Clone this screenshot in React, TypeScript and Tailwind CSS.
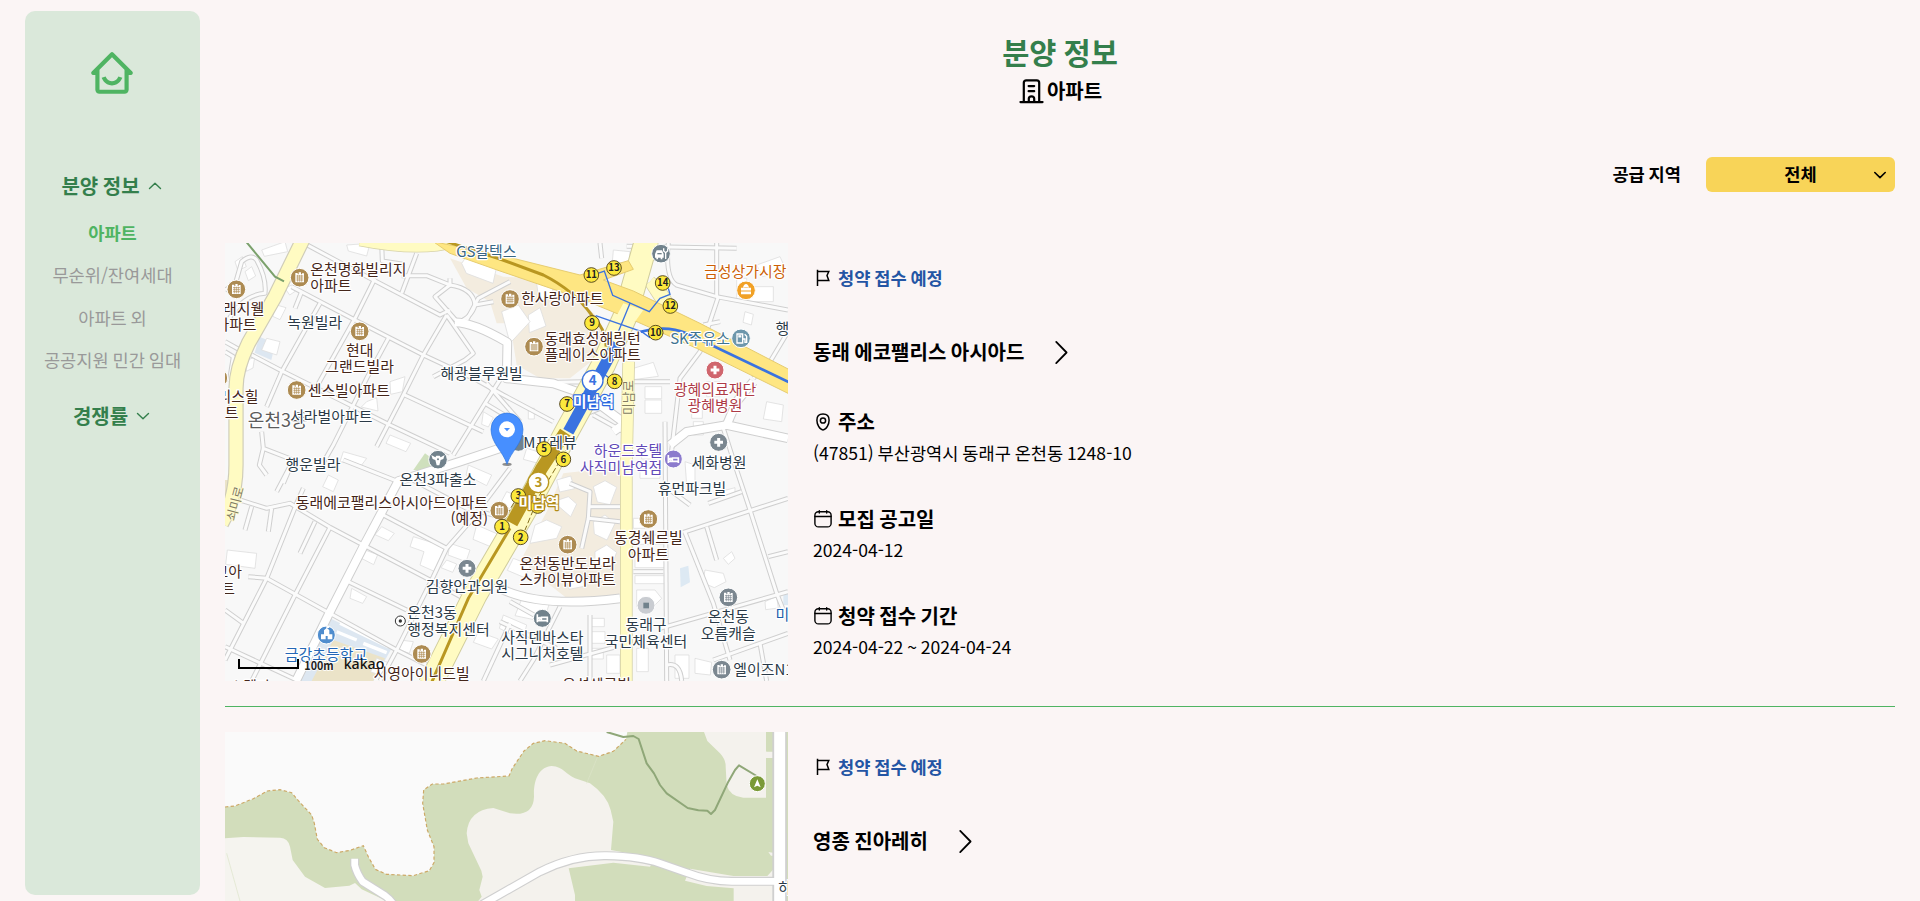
import React from 'react';
import { BiHomeSmile } from 'react-icons/bi';

type IconProps = { className?: string };

const Chevron = ({ d, className, weight = 1.4 }: { d: string; className: string; weight?: number }) => (
  <svg className={className} viewBox="0 0 14 14" fill="none" stroke="currentColor" strokeWidth={weight} strokeLinecap="round" strokeLinejoin="round">
    <path d={d} />
  </svg>
);

const BuildingIcon = ({ className }: IconProps) => (
  <svg className={className} viewBox="0 0 26 26" fill="none" stroke="#000" strokeWidth="2.300" strokeLinecap="round" strokeLinejoin="round">
    <path d="M1.500 24H24.500M5 24V4Q5 1.500 7.600 1.500H18.400Q21 1.500 21 4V24M10 7.300H15.800M10 12.700H15.800M10.200 24V20.500Q10.200 18 13 18T15.800 20.500V24" />
  </svg>
);

const FlagIcon = ({ className }: IconProps) => (
  <svg className={className} viewBox="0 0 20 20" fill="none" stroke="#000" strokeWidth="1.500" strokeLinecap="square">
    <path d="M4.500 2.500V17.300M4.500 3.500H15.800L14 7.500 15.800 12.500H4.500" />
  </svg>
);

const PinIcon = ({ className }: IconProps) => (
  <svg className={className} viewBox="0 0 20 20" fill="none" stroke="#000" strokeWidth="1.500">
    <path d="M3.900 8.200C3.900 4.500 6.300 2.100 10 2.100S16.100 4.500 16.100 8.200C16.100 12 13.500 17.900 10 17.900S3.900 12 3.900 8.200Z" />
    <circle cx="10" cy="8.500" r="2.600" />
  </svg>
);

const CalendarIcon = ({ className }: IconProps) => (
  <svg className={className} viewBox="0 0 20 20" fill="none" stroke="#000" strokeWidth="1.400" strokeLinecap="round">
    <rect x="1.900" y="2.700" width="16.200" height="15.200" rx="3.500" />
    <path d="M2 7.500H18M6.300 1.700V4M13.700 1.700V4" />
  </svg>
);

const minorRoads = [
  'M262 30L355 80 660 240 690 225', 'M485 24L487 78 550 88', 'M590 55L545 175', 'M465 130L405 250 290 455',
  'M215 155L405 255 610 360 770 435 850 480 1000 560', 'M245 170L225 220', 'M300 205L185 410 140 515', 'M505 310L440 430 340 630 300 700',
  'M680 240L610 360 545 490 470 635', 'M95 360L190 410 350 490 510 570 690 655', 'M550 478L790 590', 'M545 122H620L690 150V130',
  'M690 150L645 185 720 270', 'M690 150Q760 160 765 210 755 250 705 265', 'M680 240L760 355 735 375 640 425', 'M865 395L795 505 700 660',
  'M800 445L900 560', 'M795 505L870 550', 'M125 590L130 640 220 675 170 770', 'M130 640L118 690 140 720', 'M15 275Q60 180 135 175 140 130 110 75 95 55 65 80L45 150 15 165',
  'M15 320L60 345', 'M15 350L40 365 28 440', 'M220 675L190 745',
  'M740 255L775 190 870 140', 'M765 210L820 200',
  'M60 795L140 820 210 805 330 877 430 930', 'M95 815L75 885', 'M155 820L145 890', 'M250 760L230 805 140 1030 15 1275', 'M330 877L225 1080 95 1338',
  'M285 860L240 955', 'M85 1025L140 1030 320 1130', 'M15 1125L70 1165', 'M370 675L530 738', 'M430 930L630 1035 740 1095', 'M490 840L680 940',
  'M870 700L750 860 680 940 640 1025 530 1245 480 1338', 'M385 1040L560 1125', 'M330 1135L530 1245 620 1290', 'M870 1165L790 1338', 'M15 1235L230 1335',
  'M560 725L740 820 860 850', 'M1140 24L1145 70', 'M1220 34L1550 40', 'M1345 24Q1335 130 1370 150L1490 185 1704 225', 'M1495 185L1440 350 1380 430 1350 690',
  'M1490 24V185', 'M1450 270L1500 260', 'M1704 290L1650 380 1600 430', 'M1120 540L1210 590', 'M1240 440L1350 440', 'M1015 442L1090 440 1140 520 1040 560',
  'M1335 560L1340 1338', 'M1240 1010H1330', 'M1510 580L1545 690 1590 825 1670 1075 1700 1150', 'M1390 892L1704 790', 'M1395 892L1480 1105 1530 1275', 'M1460 875L1490 975',
  'M1320 1180L1704 1070', 'M1480 1275L1704 1195', 'M1620 1225L1640 1338', 'M1465 805L1565 770', 'M1350 765L1410 810', 'M1645 965L1704 950',
  'M1020 1115L940 1275 900 1338', 'M840 1160L1010 1240', 'M1110 1140V1338', 'M990 1290L1190 1235', 'M1340 1290Q1380 1280 1385 1338', 'M870 1100L960 1150',
  'M1050 745L1110 770 1105 850 1200 860', 'M1200 815L1110 815', 'M1105 850L1085 940',
];
const wideRoads = [
  'M705 262Q760 262 862 322L860 430 1000 445 1100 480 1215 565', 'M1215 565L1180 590', 'M870 630L720 680 535 738 430 935 325 1140 228 1338',
  'M840 1060Q960 1120 1200 1090', 'M1704 610L1520 570 1400 590 1350 630', 'M1520 570L1550 500 1600 440',
];
const buildings = [
  'M125 45l70-25 8 30-70 14z', 'M45 80l22-15 12 30-25 12z', 'M75 110l20-15 12 28-22 14z', 'M380 30l70-5-10 38-55-15z', 'M725 85l14-20 90 35-10 45-80-30z',
  'M195 160l20-10 12 18-18 12z', 'M170 210l28 8-18 36-22-10z', 'M140 310l40 10-10 40-45-15z', 'M82 375l22-8-5 32-20 10z', 'M510 440l45-15-8 45-35 8z', 'M440 500l30-12 4 40-50-12z',
  'M510 600l62 25-14 25-60-25z', 'M370 650l70 20-15 20-65-10z', 'M790 530l30 18-15 28-20-8z', 'M22 945l88 10-5 45-88-12z', 'M325 720l30 15-15 35-32-15z', 'M485 875l38 20-18 22-40-18z',
  'M580 905l95 30-30 75-45-20 12-40-42-15z', 'M435 945l38 14-12 30-35-18z', 'M690 925l60 20-12 35-54-20z', 'M680 975l30 12-12 25-35-14z', 'M395 1060l45 25-12 20-38-15z', 'M540 1215l40 5-12 35-35-12z',
  'M745 690l70 30-15 32-62-32z', 'M770 870l65 28-16 40-60-25z', 'M470 1270l40 15-20 40-38-15z', 'M850 1140l70 30-12 45-70-35z', 'M775 1190l60 22-20 30-55-20z',
  'M925 240l35-22 18 55-50 20z', 'M845 230l50-20 35 50-60 65z', 'M950 145l40-18 12 60-45 10z', 'M1550 130h30v25h80v45h-110z', 'M1180 45l50 5-3 35-50-4z', 'M1610 90l70-25 18 40-70 20z',
  'M1275 455h50v36h-50z', 'M1275 495h50v40h-50z', 'M1240 400l60-18 15 42-75 10z', 'M1415 500h32v50h-32z', 'M1460 440h40v45h-40z', 'M1420 560h30v40h-30z', 'M1575 230l25 8-6 32-25-8z',
  'M1265 640h42v32h-42z', 'M1260 700h60v30h-60z', 'M1395 680l30 10v60h-25z', 'M1640 500l50 10-5 50-55-8z', 'M1240 850h35v30h-35z', 'M1245 900h90v28h-90z', 'M1245 960h90v38h-90z', 'M1245 1022h90v24h-90z',
  'M1250 1065h55l20 25-25 25h-50z', 'M1455 1005l55 10 8 25-35 18-35-15z', 'M1510 970l25-20 10 20-20 18z', 'M1500 770l45-12v25l-40 12z', 'M1365 1260h42v70h-42z', 'M1425 1270l50 12-4 38-46-5z',
  'M1115 1150h38v25h-38z', 'M1115 1190h40v35h-40z', 'M1115 1240h35v32h-35z', 'M1160 1260h40v55h-40z', 'M1250 1240h35v70h-35z', 'M910 1080l80 20-20 60-85-18z',
  'M945 870l35-15 45 20-15 35-80 15z', 'M1000 800l45-15 25 22-18 38z', 'M1010 735l42-12 12 38-45 10z', 'M1120 755l35-18 35 20-20 52-38-8z', 'M1120 860l35-20 30 25-24 50-38-18z', 'M1125 950l35-20 30 22-20 52-45-20z', 'M1040 1030l35-12 22 35-50 10z',
  'M860 770l30 12-16 42-35-15z', 'M880 970l52 20-18 38-52-22z', 'M925 520h18v32h-18z', 'M920 640l50 15-15 30-45-12z', 'M1635 1100l35-16 5 35-38 5z',
];

type Label = { t: string; x: number; y: number; c?: string; s?: number; a?: 'start' | 'end'; halo?: string; w?: number };
const BROWN = '#45261a';
const SLATE = '#2b3a47';
const labels: Label[] = [
  { t: '온천명화빌리지', x: 271, y: 120, c: BROWN, a: 'start' }, { t: '아파트', x: 271, y: 169, c: BROWN, a: 'start' },
  { t: '래지웰', x: 71, y: 236, c: BROWN }, { t: '아파트', x: 48, y: 286, c: BROWN }, { t: '녹원빌라', x: 284, y: 280 },
  { t: '현대', x: 419, y: 363, c: BROWN }, { t: '그랜드빌라', x: 419, y: 412, c: BROWN }, { t: '센스빌아파트', x: 263, y: 483, c: BROWN, a: 'start' },
  { t: '리스힐', x: 54, y: 501, c: BROWN }, { t: '트', x: 35, y: 550, c: BROWN }, { t: '온천3동', x: 173, y: 575, c: '#5c5c5c', s: 54 },
  { t: '서라벌아파트', x: 334, y: 560 }, { t: '행운빌라', x: 279, y: 705 }, { t: '해광블루원빌', x: 785, y: 431 }, { t: 'GS칼텍스', x: 799, y: 66, c: '#386583' },
  { t: '한사랑아파트', x: 1027, y: 208, c: BROWN }, { t: '동래효성해링턴', x: 1118, y: 327, c: BROWN }, { t: '플레이스아파트', x: 1118, y: 376, c: BROWN },
  { t: '금성상가시장', x: 1576, y: 127, c: '#cc5f05' }, { t: 'SK주유소', x: 1440, y: 328, c: '#3f7492' }, { t: '행', x: 1687, y: 298 },
  { t: '광혜의료재단', x: 1485, y: 480, c: '#ae3b47' }, { t: '광혜병원', x: 1485, y: 529, c: '#ae3b47' }, { t: 'M프레뷰', x: 990, y: 638 },
  { t: '하운드호텔', x: 1327, y: 664, c: '#6149b8', a: 'end' }, { t: '사직미남역점', x: 1327, y: 713, c: '#6149b8', a: 'end' },
  { t: '세화병원', x: 1497, y: 699 }, { t: '휴먼파크빌', x: 1416, y: 778 },
  { t: '온천3파출소', x: 654, y: 750 }, { t: '동래에코팰리스아시아드아파트', x: 804, y: 819, c: BROWN, a: 'end' }, { t: '(예정)', x: 804, y: 868, c: BROWN, a: 'end' },
  { t: '교아', x: 25, y: 1027, c: BROWN }, { t: '트', x: 24, y: 1078, c: BROWN }, { t: '김향안과의원', x: 741, y: 1072 },
  { t: '온천3동', x: 562, y: 1150, a: 'start' }, { t: '행정복지센터', x: 562, y: 1200, a: 'start' }, { t: '금강초등학교', x: 318, y: 1274, c: '#2567b5' },
  { t: '지영아이니드빌', x: 605, y: 1331, c: BROWN }, { t: '스텔라', x: 90, y: 1370, c: BROWN },
  { t: '동경쉐르빌', x: 1285, y: 925, c: BROWN }, { t: '아파트', x: 1285, y: 974, c: BROWN },
  { t: '온천동반도보라', x: 1043, y: 1002, c: BROWN }, { t: '스카이뷰아파트', x: 1043, y: 1051, c: BROWN },
  { t: '사직덴바스타', x: 967, y: 1224 }, { t: '시그니처호텔', x: 967, y: 1273 }, { t: '동래구', x: 1278, y: 1185 }, { t: '국민체육센터', x: 1278, y: 1235 },
  { t: '온천동', x: 1525, y: 1162 }, { t: '오름캐슬', x: 1525, y: 1212 }, { t: '엘이즈N1', x: 1540, y: 1320, a: 'start' }, { t: '미', x: 1687, y: 1154, c: '#1c5eaa' },
  { t: '우성쉐르빌', x: 1130, y: 1365, c: BROWN },
];

const MapText = ({ t, x, y, c = SLATE, s = 44.8, a, halo = '#fff', w = 400 }: Label) => (
  <text x={x} y={y} fill={c} fontSize={s} fontWeight={w} textAnchor={a ?? 'middle'} stroke={halo} strokeWidth="7" strokeLinejoin="round" paintOrder="stroke">{t}</text>
);

const Apt = ({ x, y, c = '#ad8b52' }: { x: number; y: number; c?: string }) => (
  <g transform={`translate(${x} ${y})`}>
    <circle r="28" fill={c} stroke="#fff" strokeWidth="3" />
    <path d="M-13 -10V-14H-6V-10H-3V-16H4V-10H7V-13H13V14H-13Z" fill="#fff" />
    <path d="M-10 -5H11M-10 1H11M-10 7H11M-6 -8V12M0 -8V12M6 -8V12" stroke={c} strokeWidth="2" />
  </g>
);
const Cross = ({ x, y, c = '#7b8790' }: { x: number; y: number; c?: string }) => (
  <g transform={`translate(${x} ${y})`}>
    <circle r="27" fill={c} stroke="#fff" strokeWidth="3" />
    <path d="M-13 0H13M0 -13V13" stroke="#fff" strokeWidth="9" />
  </g>
);
const Bed = ({ x, y, c }: { x: number; y: number; c: string }) => (
  <g transform={`translate(${x} ${y})`}>
    <circle r="27" fill={c} stroke="#fff" strokeWidth="3" />
    <path d="M-15 -12V12M-15 7H15V12M15 7V-3H-3V7M-9 -2a2 2 0 1 0 .1 0" stroke="#fff" strokeWidth="5" fill="none" />
  </g>
);
const Exit = ({ n, x, y }: { n: number; x: number; y: number }) => (
  <g>
    <circle cx={x} cy={y} r="22" fill="#fce83c" stroke="#5b4d20" strokeWidth="3" />
    <text x={x} y={y + 10} fontSize="29" fontWeight="700" textAnchor="middle" fill="#222">{n}</text>
  </g>
);

const apartments = [[239, 128], [49, 163], [419, 289], [230, 465], [-5, 429], [870, 192], [942, 335], [838, 827], [605, 1257], [1285, 852], [1043, 929]];
const exits = [[11, 1114, 120], [13, 1182, 99], [14, 1328, 144], [12, 1351, 213], [9, 1116, 264], [10, 1307, 293], [8, 1184, 439], [7, 1041, 507], [5, 972, 642], [6, 1030, 673], [1, 846, 875], [2, 902, 907]];

const CityMap = () => (
  <svg className="block h-[438px] w-[563px]" viewBox="15 24 1689 1314" preserveAspectRatio="none">
    <rect x="15" y="24" width="1689" height="1314" fill="#f8f8f8" />
    <path d="M690 70L850 125 960 130 1040 150 1125 240 1160 300 1150 350 1050 430 960 430 890 390 870 265 830 265 810 200 740 160Z" fill="#f3ecdf" />
    <path d="M1030 715L1200 695V1080L1060 1105 900 980 980 830Z" fill="#f3ecdf" />
    <path d="M615 655l40 30-15 25-60-5z" fill="#cfe0bd" />
    <path d="M118 305l48 20-12 50-50-22z" fill="#dde7f1" />
    <path d="M330 1150L515 1240 460 1338H230Z" fill="#dde7f1" />
    <path d="M340 1215L495 1270 460 1338H275Z" fill="#ebe3c8" />
    <path d="M1380 1000l25-8 5 50-28 15zM1690 1075h20v35h-20z" fill="#dde9f3" />
    <path d="M15 735h12v50H15z" fill="#ebe3c8" />
    <g fill="none" stroke="#fff" strokeWidth="10"><path d="M360 1165l145 70M350 1190l60 25M430 1225l70 28" /></g>
    <g fill="#fff" stroke="#dedede" strokeWidth="2.500">{buildings.map((d) => <path key={d} d={d} />)}</g>
    <g fill="none" strokeLinejoin="round">
      <g stroke="#cfcfcf" strokeWidth="15">{minorRoads.map((d) => <path key={d} d={d} />)}</g>
      <g stroke="#cfcfcf" strokeWidth="29">{wideRoads.map((d) => <path key={d} d={d} />)}</g>
      <g stroke="#fbfbfb" strokeWidth="9">{minorRoads.map((d) => <path key={d} d={d} />)}</g>
      <g stroke="#fff" strokeWidth="23">{wideRoads.map((d) => <path key={d} d={d} />)}</g>
      <path d="M248 15L165 185 85 325Q48 400 48 460V690Q48 790 5 865" stroke="#cfccb8" strokeWidth="46" />
      <path d="M248 15L165 185 85 325Q48 400 48 460V690Q48 790 5 865" stroke="#fffbc2" strokeWidth="39" />
      <path d="M1290 140L1345 225 1330 290M1226 380L1219 700V1345M420 15Q600 50 700 20M1290 140Q1340 180 1350 230" stroke="#d6d2a8" strokeWidth="38" />
      <path d="M1290 140L1345 225 1330 290M1226 380L1219 700V1345M420 15Q600 50 700 20M1290 140Q1340 180 1350 230" stroke="#fffbc2" strokeWidth="33" />
      <path d="M1280 15L1215 245 1150 390 1040 590 920 815 765 1080 630 1350" stroke="#d0cc9c" strokeWidth="75" />
      <path d="M1280 15L1215 245 1150 390 1040 590 920 815 765 1080 630 1350" stroke="#fffbc2" strokeWidth="69" />
    </g>
    <path d="M640 20L840 60 1080 120 1225 77 1240 103 1150 135 1240 168 1440 265 1710 405V478L1430 340 1255 262 1080 190 840 108 690 55Z" fill="#fee682" stroke="#e6cc70" strokeWidth="3" />
    <path d="M1210 205l60 20-25 35-55-18z" fill="#fffbc2" />
    <g fill="none">
      <path d="M680 20L840 72 970 120Q1060 165 1115 240 1160 285 1158 335" stroke="#b99721" strokeWidth="9" />
      <path d="M80 22L165 125 192 139" stroke="#7ba16c" strokeWidth="6" />
      <path d="M1190 325L1045 590" stroke="#3a73e0" strokeWidth="34" />
      <path d="M1036 592L965 700 875 865" stroke="#b99721" strokeWidth="38" />
      <path d="M870 880L745 1090 635 1342" stroke="#b99721" strokeWidth="9" />
      <path d="M1262 290Q1340 270 1400 295L1710 443" stroke="#3a73e0" strokeWidth="8" />
      <path d="M1114 122L1153 108 1178 181 1288 230 1320 190 1350 178 1345 160M1230 205L1195 290M1127 242L1265 290 1290 308M1148 415L1180 438" stroke="#3a73e0" strokeWidth="4" />
      <path d="M1060 610L950 795M895 780L840 875M950 800L915 885" stroke="#85701f" strokeWidth="3" strokeDasharray="18 8" />
    </g>
    <g fontFamily='"Noto Sans CJK KR", sans-serif'>
      <text transform="translate(1240 540) rotate(-90)" fontSize="38" fill="#827b61" stroke="#fffbd0" strokeWidth="5" paintOrder="stroke">미남로</text>
      <text transform="translate(45 860) rotate(-75)" fontSize="38" fill="#827b61" stroke="#fffbd0" strokeWidth="5" paintOrder="stroke">쇠미로</text>
      {apartments.map(([x, y]) => <Apt key={`${x}-${y}`} x={x} y={y} />)}
      <Apt x={1525} y={1087} c="#7b8790" /><Apt x={1505} y={1304} c="#7b8790" />
      <Cross x={1496} y={622} /><Cross x={741} y={1000} /><Cross x={1485} y={405} c="#d0666e" />
      <Bed x={1360} y={672} c="#8c7bcd" /><Bed x={967} y={1150} c="#71828c" />
      <g stroke="#fff" strokeWidth="3">
        <circle cx="1323" cy="56" r="28" fill="#71828c" /><circle cx="1578" cy="166" r="28" fill="#f1a126" /><circle cx="1563" cy="310" r="28" fill="#6d97ac" />
        <circle cx="654" cy="674" r="28" fill="#71828c" /><circle cx="319" cy="1200" r="27" fill="#4f8dce" /><circle cx="1278" cy="1111" r="27" fill="#c9ccd1" />
        <circle cx="895" cy="622" r="27" fill="#71828c" />
      </g>
      <path d="M1305 68V57l5-11h16l5 11v11h-4v5h-5v-5h-8v5h-5v-5z" fill="#fff" />
      <path d="M1312 56h13" stroke="#71828c" strokeWidth="4" />
      <path d="M1337 72V52M1331 40v8l6 5 6-5v-8" fill="none" stroke="#fff" strokeWidth="4" />
      <path d="M1563 158h30v20h-30zM1571 157q0-9 7-9t7 9" fill="#fff" /><path d="M1571 158q0-9 7-9t7 9" fill="none" stroke="#fff" strokeWidth="3" /><path d="M1563 168h30" stroke="#f1a126" strokeWidth="3" />
      <path d="M1551 297h17v27h-17zM1568 312h7v10h5v-18l-6-6" fill="none" stroke="#fff" strokeWidth="4" /><path d="M1555 304h9" stroke="#fff" strokeWidth="7" />
      <path d="M634 660l12 7 3-5h10l3 5 12-7-4 12-8 3-4 16h-8l-4-16-8-3z" fill="#fff" /><circle cx="654" cy="673" r="3" fill="#71828c" />
      <path d="M303 1213V1198h9v-12l7-6V1172h9v7h-7l7 7v12h9v15h-14v-10h-6v10z" fill="#fff" />
      <path d="M1270 1103h17v17h-17z" fill="#71828c" />
      <circle cx="541" cy="1158" r="15" fill="#fff" stroke="#333" strokeWidth="3" /><circle cx="541" cy="1158" r="5" fill="#333" />
      {labels.map((l) => <MapText key={`${l.t}-${l.x}-${l.y}`} {...l} />)}
      <Exit n={3} x={895} y={783} /><Exit n={4} x={953} y={813} />
      {exits.map(([n, x, y]) => <Exit key={n} n={n} x={x} y={y} />)}
      <circle cx="1118" cy="437" r="31" fill="#fff" stroke="#3a73e0" strokeWidth="4" /><circle cx="955" cy="742" r="31" fill="#fff" stroke="#b99721" strokeWidth="4" />
      <text x="1118" y="451" fontSize="40" fontWeight="700" fill="#3a73e0" textAnchor="middle">4</text>
      <text x="955" y="756" fontSize="40" fontWeight="700" fill="#b99721" textAnchor="middle">3</text>
      <MapText t="미남역" x={1120} y={517} c="#fff" halo="#2e6ae0" w={700} /><MapText t="미남역" x={957} y={820} c="#fff" halo="#b28c16" w={700} />
      <ellipse cx="861" cy="688" rx="14" ry="5" fill="#8d8d8d" />
      <path d="M861 688C850 650 813 625 813 583a48 49 0 0 1 96 0C909 625 872 650 861 688Z" fill="#478fff" stroke="#2f75dd" strokeWidth="2" />
      <circle cx="861" cy="583" r="24" fill="#fff" /><path d="M852 579h18l-9 10z" fill="#478fff" />
      <path d="M57 1272V1299H234V1272" fill="none" stroke="#000" strokeWidth="6" />
      <text x="253" y="1305" fontSize="35" fontWeight="700" fill="#222" stroke="#fff" strokeWidth="4" paintOrder="stroke" textLength="88" lengthAdjust="spacingAndGlyphs">100m</text>
      <text x="371" y="1301" fontSize="43" fontWeight="500" fill="#111" fontFamily='"Noto Sans", sans-serif' textLength="122" lengthAdjust="spacingAndGlyphs">kakao</text>
    </g>
  </svg>
);

const FOREST_EDGE = 'M15 321L45 318 100 296 142 273 180 269 215 278 235 302 275 345 283 370 292 418 313 443 350 458 390 451 430 437 445 470 466 508 500 523 580 527 628 512 642 488V440L622 390 608 310 611 270 637 252 670 252 770 234 867 228 877 205 912 153 940 130 975 122 1035 130 1070 153 1136 169 1180 154 1218 118';

const ForestMap = () => (
  <svg className="block h-[438px] w-[563px]" viewBox="15 96 1689 1314" preserveAspectRatio="none">
    <rect x="15" y="96" width="1689" height="1314" fill="#fafafa" />
    <path d={`${FOREST_EDGE}L1222 96H1704V1410H15Z`} fill="#d2ddbb" />
    <path d="M15 415L70 411 180 413Q205 415 210 440L218 480 255 530 315 564 388 557 405 549 425 568 500 603 560 650V1410H15Z" fill="#f5f4ef" />
    <path d="M740 400Q745 330 820 324L870 340Q940 350 942 290C940 235 960 200 995 198 1030 200 1040 225 1065 235L1110 250Q1160 285 1172 330L1180 365 1173 450 1305 475 1290 500 1180 488 1046 505 1065 585V700H700L785 590 778 570 788 530 784 512 745 430Z" fill="#f4f2ed" />
    <path d="M1452 96L1462 123 1500 160Q1518 180 1517 200L1520 255Q1530 290 1570 293H1640V96Z" fill="#f4f2ed" />
    <path d="M1638 96h25v59h-25z" fill="#d2ddbb" />
    <path d="M1638 174h25v120h-25z" fill="#d2ddbb" />
    <path d="M1638 155h25v19h-25zM1645 456l18 3v8h-10zM1640 530l23-25v25zM1395 542L1410 506 1540 528H1663V700H1541V565L1460 558Z" fill="#f4f2ed" />
    <path d="M1100 250L1133 170M20 460L60 603" stroke="#dce4c9" strokeWidth="2" />
    <path d={FOREST_EDGE} fill="none" stroke="#cda866" strokeWidth="3.500" strokeDasharray="10 7" />
    <g fill="none" strokeLinejoin="round">
      {[{ c: '#d0d0d0', a: 27, b: 44 }, { c: '#fff', a: 20, b: 33 }].map(({ c, a, b }) => (
        <g key={c} stroke={c}>
          <path d="M404 476V495Q410 520 428 545L495 587Q540 620 550 700" strokeWidth={a} />
          <path d="M740 640L840 583 960 515Q1060 465 1160 467T1320 490L1400 518Q1470 545 1540 544H1680" strokeWidth={a} />
          <path d="M1679 90V710" strokeWidth={b} />
        </g>
      ))}
      <path d="M1160 96L1210 111 1240 108 1256 117 1280 190 1302 220 1320 255 1340 280 1403 324 1435 331 1462 332 1473 342 1485 330 1525 245 1545 210 1557 196 1610 228" stroke="#8fa778" strokeWidth="6" />
    </g>
    <path d="M1700 96h4v54h-4zM1700 180h4v220h-4z" fill="#d2ddbb" />
    <circle cx="1612" cy="251" r="24" fill="#7a9a37" stroke="#fff" strokeWidth="3" />
    <path d="M1612 238L1622 262 1612 257 1602 262Z" fill="#fff" />
    <text x="1675" y="580" fontSize="44" fill="#2b3a47" stroke="#fff" strokeWidth="7" paintOrder="stroke" fontFamily='"Noto Sans CJK KR", sans-serif'>하</text>
  </svg>
);

const Detail = ({ icon, title, value }: { icon: React.ReactNode; title: string; value: string }) => (
  <div className="flex flex-col">
    <div className="flex h-8 items-center gap-[5px] text-xl font-bold">{icon}{title}</div>
    <div className="h-[30px] text-[17.6px] leading-[30px]">{value}</div>
  </div>
);

type Listing = { name: string; address: string; noticeDate: string; period: string; map: React.ReactNode };

const ListingRow = ({ item }: { item: Listing }) => (
  <li className="mb-[25px] box-content flex h-[463px] gap-[25px] border-b border-[#4fb462]">
    <div className="h-[438px] w-[563px] shrink-0 overflow-hidden">{item.map}</div>
    <div className="flex flex-col pt-5">
      <div className="flex h-[30px] items-center gap-[5px] text-[17.6px] font-bold text-[#2455a4]">
        <FlagIcon className="size-5" />청약 접수 예정
      </div>
      <div className="mt-[43px] flex h-8 items-center text-xl font-bold">
        {item.name}
        <Chevron className="ml-6 size-[25px]" d="M4.600 1.100 10.400 7 4.600 12.900" weight={1} />
      </div>
      <div className="mt-[38px] flex flex-col gap-[35px]">
        <Detail icon={<PinIcon className="size-5" />} title="주소" value={item.address} />
        <Detail icon={<CalendarIcon className="size-5" />} title="모집 공고일" value={item.noticeDate} />
        <Detail icon={<CalendarIcon className="size-5" />} title="청약 접수 기간" value={item.period} />
      </div>
    </div>
  </li>
);

const listings: Listing[] = [
  { name: '동래 에코팰리스 아시아드', address: '(47851) 부산광역시 동래구 온천동 1248-10', noticeDate: '2024-04-12', period: '2024-04-22 ~ 2024-04-24', map: <CityMap /> },
  { name: '영종 진아레히', address: '', noticeDate: '', period: '', map: <ForestMap /> },
];

const menu = ['아파트', '무순위/잔여세대', '아파트 외', '공공지원 민간 임대'];

export default function App() {
  return (
    <div lang="ko" className="flex h-[901px] overflow-hidden bg-[#fbf5f5] font-['Noto_Sans_CJK_KR',sans-serif] text-black [word-spacing:-1.1px]">
      <aside className="mt-[11px] ml-[25px] flex h-[884px] w-[175px] shrink-0 flex-col items-center rounded-[10px] bg-[#dae8da] pt-[37px]">
        <BiHomeSmile className="mr-px size-[50px] text-[#4fb462]" />
        <div className="mt-[72px] mr-[2px] flex h-8 items-center gap-2 text-xl font-bold text-[#347f4c]">
          분양 정보<Chevron className="size-[14px]" d="M1.500 9.500 7 4.200 12.500 9.500" />
        </div>
        <ul className="mt-[10px] flex flex-col items-center text-[17.6px] text-[#999]">
          {menu.map((m, i) => (
            <li key={m} className={i === 0 ? 'h-[42px] leading-[42px] font-bold text-[#4fb462]' : 'h-[42.5px] leading-[41px]'}>{m}</li>
          ))}
        </ul>
        <div className="mt-[18.500px] mr-[2px] flex h-8 items-center gap-2 text-xl font-bold text-[#347f4c]">
          경쟁률<Chevron className="size-[14px]" d="M1.500 4.500 7 9.800 12.500 4.500" />
        </div>
      </aside>
      <main className="ml-[25px] w-[1670px] shrink-0">
        <header className="flex flex-col items-center pt-[29px]">
          <h1 className="h-11 text-[29.5px] leading-[44px] font-bold text-[#347f4c]">분양 정보</h1>
          <div className="mt-[2px] flex h-8 items-center gap-[3px] pl-px text-xl font-bold"><BuildingIcon className="size-[25px]" />아파트</div>
        </header>
        <div className="mt-[50px] flex h-[35px] items-center justify-end gap-[25px] text-[17.6px] font-bold">
          <span>공급 지역</span>
          <button className="flex h-[35px] w-[189px] items-center rounded-md bg-[#f8d458] pr-[8px]">
            <span className="flex-1 pl-[22px] text-center">전체</span>
            <Chevron className="size-[14px]" d="M1.800 4.500 7 9.600 12.200 4.500" weight={1.6} />
          </button>
        </div>
        <ul className="mt-[51px]">{listings.map((item) => <ListingRow key={item.name} item={item} />)}</ul>
      </main>
    </div>
  );
}
